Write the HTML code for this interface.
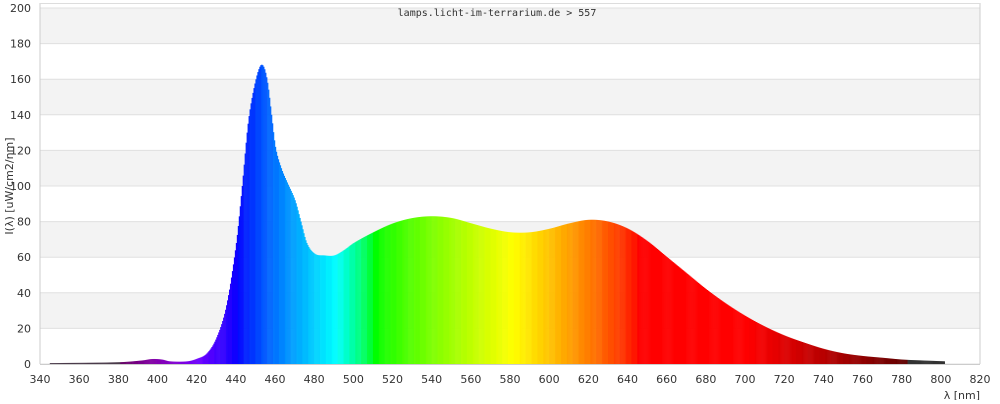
<!DOCTYPE html>
<html><head><meta charset="utf-8"><style>
body{margin:0;background:#fff;width:1000px;height:400px;overflow:hidden;font-family:"DejaVu Sans","Liberation Sans",sans-serif}
svg text{font-family:"DejaVu Sans","Liberation Sans",sans-serif;font-size:11px;fill:#333}
</style></head><body>
<svg id="s" width="1000" height="400" xmlns="http://www.w3.org/2000/svg">
<g id="bg"></g><g id="sp"></g>
<line x1="40" y1="3" x2="40" y2="364" stroke="#ccc"/>
<line x1="980" y1="3" x2="980" y2="364" stroke="#ccc"/>
<line x1="40" y1="3.5" x2="980" y2="3.5" stroke="#ddd"/>
<line x1="40" y1="364.5" x2="980" y2="364.5" stroke="#ccc"/>
<g id="lab"></g>
<text x="497" y="16" text-anchor="middle" style="font-family:'DejaVu Sans Mono','Liberation Mono',monospace;font-size:10px">lamps.licht-im-terrarium.de &gt; 557</text>
<text transform="translate(13,186) rotate(-90)" text-anchor="middle">I(λ) [uW/cm2/nm]</text>
<text x="980" y="399" text-anchor="end">λ [nm]</text>
</svg>
<script>
var NS="http://www.w3.org/2000/svg";
function el(p,t,a){var e=document.createElementNS(NS,t);for(var k in a)e.setAttribute(k,a[k]);document.getElementById(p).appendChild(e);return e;}
function Y(v){return 364-v*1.78;}
function X(n){return 40+(n-340)*940/480;}
for(var k=0;k<=10;k++){
 var y=Y(k*20);
 if(k%2==1) el("bg","rect",{x:40,y:Y(k*20+20),width:940,height:35.6,fill:"#f3f3f3"});
 el("bg","line",{x1:40,y1:y,x2:980,y2:y,stroke:"#e0e0e0"});
 var t=el("lab","text",{x:31,y:y+4,"text-anchor":"end"});t.textContent=k*20;
}
for(var n=340;n<=820;n+=20){var t=el("lab","text",{x:X(n),y:383,"text-anchor":"middle"});t.textContent=n;}
var P=[[345,.5],[380,1],[392,2],[397,2.8],[402,2.5],[406,1.5],[415,1.5],[420,3],[425,6],[430,15],[435,33],[440,68],[443,100],[446,135],[449,155],[452,167],[454,167],[456,158],[458,140],[460,122],[463,110],[466,102],[470,92],[473,80],[476,68],[480,62],[485,61],[490,61],[495,64],[500,68],[510,74],[520,79],[530,82],[540,83],[550,82],[560,79],[570,76],[580,74],[590,74],[600,76],[610,79],[620,81],[630,80],[640,76],[650,69],[660,60],[670,51],[680,42],[690,34],[700,27],[710,21],[720,16],[730,12],[740,8.5],[750,6],[760,4.5],[770,3.5],[780,2.5],[790,2],[802,1.5]];
function val(n){for(var i=0;i<P.length-1;i++){if(n>=P[i][0]&&n<=P[i+1][0]){
 var p0=P[Math.max(i-1,0)],p1=P[i],p2=P[i+1],p3=P[Math.min(i+2,P.length-1)];
 var t=(n-p1[0])/(p2[0]-p1[0]);
 var m1=(p2[1]-p0[1])/(p2[0]-p0[0])*(p2[0]-p1[0]);
 var m2=(p3[1]-p1[1])/(p3[0]-p1[0])*(p2[0]-p1[0]);
 var t2=t*t,t3=t2*t;
 return (2*t3-3*t2+1)*p1[1]+(t3-2*t2+t)*m1+(-2*t3+3*t2)*p2[1]+(t3-t2)*m2;}}return 0;}
function col(w){
 if(w>=781)return"#333";
 if(w<380)return"#4a3a4a";
 var r=0,g=0,b=0;
 if(w<440){r=-(w-440)/60;b=1;}else if(w<490){g=(w-440)/50;b=1;}else if(w<510){g=1;b=-(w-510)/20;}
 else if(w<580){r=(w-510)/70;g=1;}else if(w<645){r=1;g=-(w-645)/65;}else{r=1;}
 var f=1;if(w<420)f=.3+.7*(w-380)/40;else if(w>700)f=.3+.7*(780-w)/80;
 function c(x){return Math.round(255*Math.pow(x*f,.8));}
 return"rgb("+c(r)+","+c(g)+","+c(b)+")";
}
for(var n=345;n<802;n+=0.5){
 var v=Math.max(val(n),0.3);var q=Math.floor(n/3)*3;
 el("sp","rect",{x:X(n),y:Y(v),width:1.2,height:v*1.78,fill:col(q)});
}
</script>
</body></html>
